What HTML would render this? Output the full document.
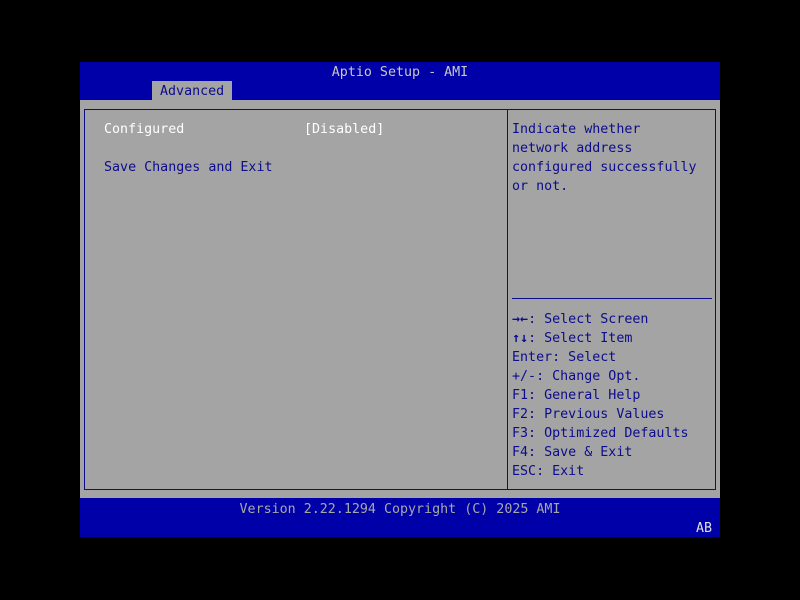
<!DOCTYPE html>
<html><head><style>
body{margin:0;width:800px;height:600px;background:#000;position:relative;overflow:hidden;font-family:"DejaVu Sans Mono","Liberation Mono",monospace;font-size:13.33px;}
div{position:absolute;}
.t{line-height:19px;white-space:pre;color:#0c0c8c;}
</style></head><body>
<div style="left:80px;top:62px;width:640px;height:38px;background:#0000a8"></div>
<div class="t" style="left:80px;top:63px;width:640px;text-align:center;color:#c8c8c8">Aptio Setup - AMI</div>
<div style="left:152px;top:81px;width:80px;height:19px;background:#a4a4a4"></div>
<div class="t" style="left:160px;top:82px;">Advanced</div>
<div style="left:80px;top:100px;width:640px;height:398px;background:#a4a4a4"></div>
<div style="left:84px;top:109px;width:630px;height:379px;border:1px solid #0c0c8c"></div>
<div style="left:507px;top:109px;width:1px;height:380px;background:#0c0c8c"></div>
<div style="left:512px;top:298px;width:200px;height:1px;background:#0c0c8c"></div>
<div class="t" style="left:104px;top:120px;color:#fff">Configured</div>
<div class="t" style="left:304px;top:120px;color:#fff">[Disabled]</div>
<div class="t" style="left:104px;top:158px;">Save Changes and Exit</div>
<div class="t" style="left:512px;top:120px;">Indicate whether
network address
configured successfully
or not.</div>
<div class="t" style="left:512px;top:310px;"><b>→←</b>: Select Screen
<b>↑↓</b>: Select Item
Enter: Select
+/-: Change Opt.
F1: General Help
F2: Previous Values
F3: Optimized Defaults
F4: Save &amp; Exit
ESC: Exit</div>
<div style="left:80px;top:498px;width:640px;height:39px;background:#0000a8"></div>
<div class="t" style="left:80px;top:500px;width:640px;text-align:center;color:#a8a8a8">Version 2.22.1294 Copyright (C) 2025 AMI</div>
<div class="t" style="left:696px;top:519px;color:#e0e0e0">AB</div>
</body></html>
